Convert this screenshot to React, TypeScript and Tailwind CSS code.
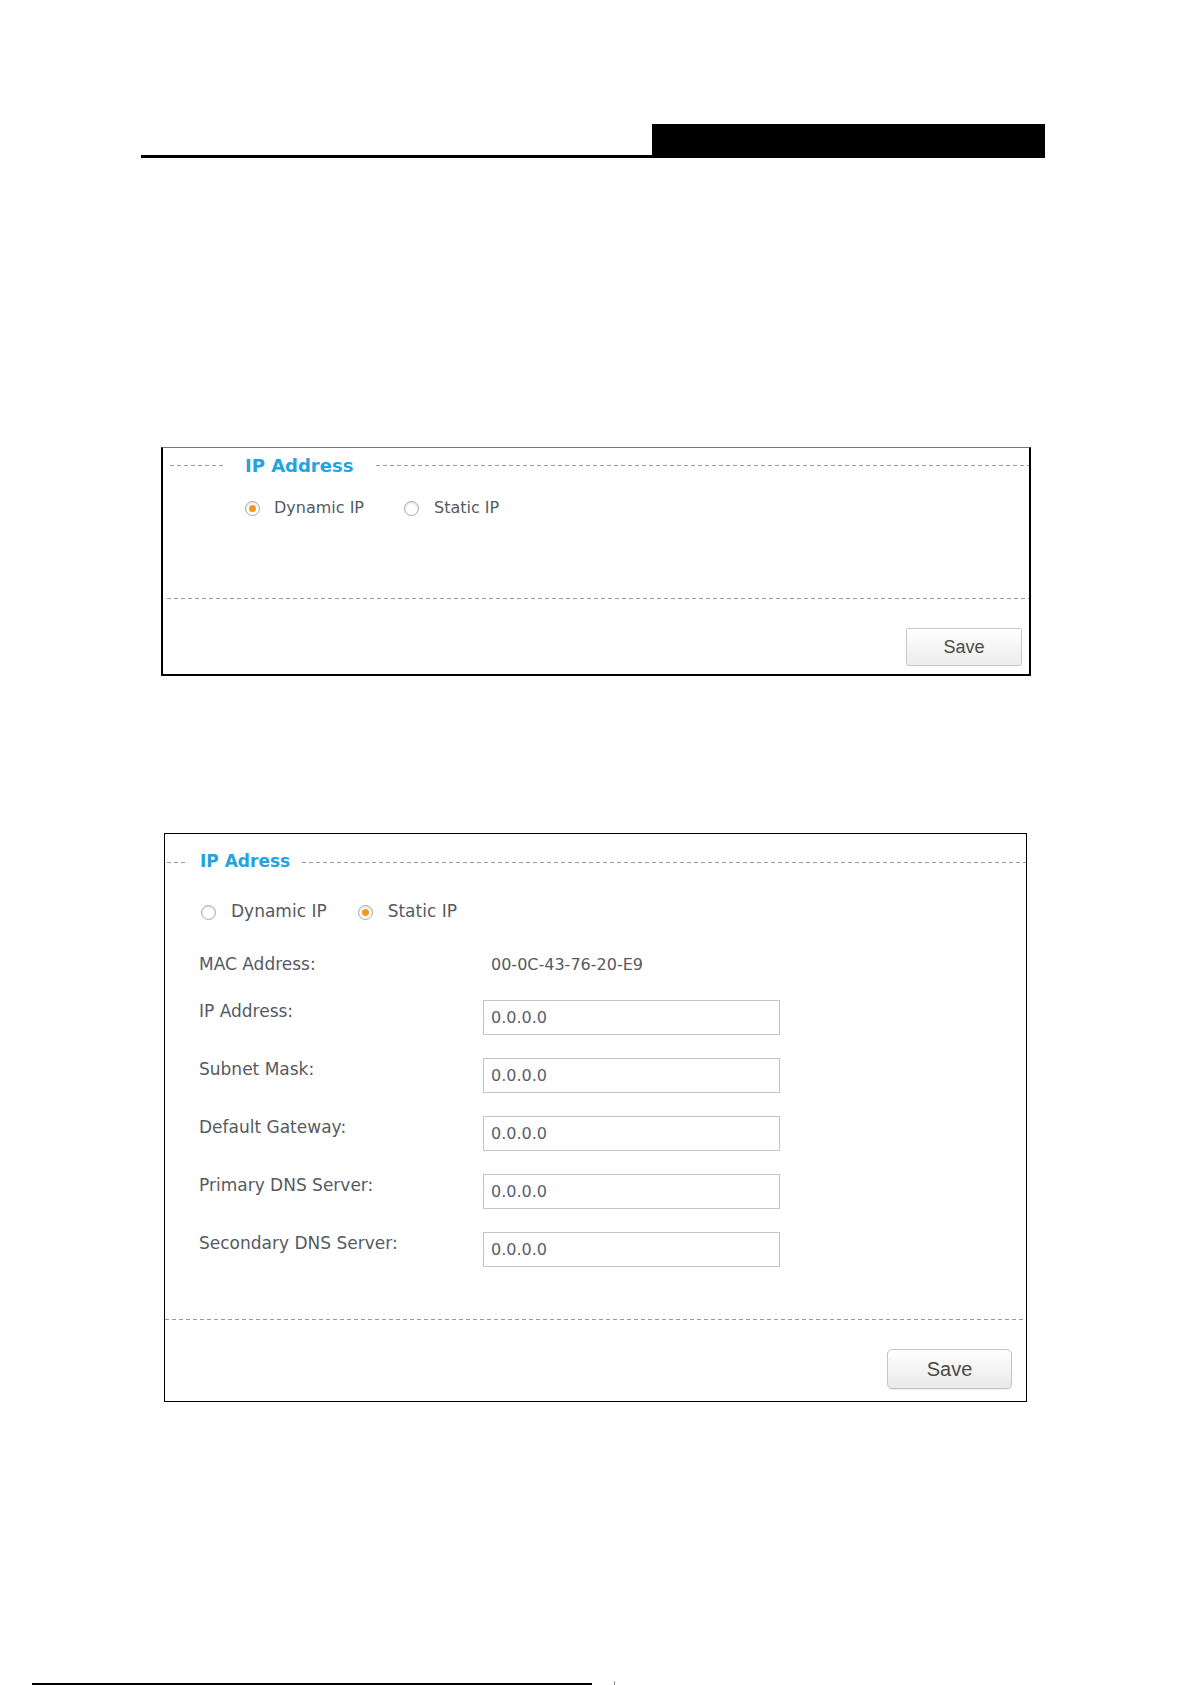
const dash =
  "h-px bg-[repeating-linear-gradient(to_right,#9a9a9a_0_4px,transparent_4px_7px)]";

function Radio({ checked }: { checked?: boolean }) {
  return (
    <span className="flex h-[15px] w-[15px] shrink-0 items-center justify-center rounded-full border border-[#a9a9a9] bg-white shadow-[inset_0_1px_2px_rgba(0,0,0,0.15)]">
      {checked && <span className="h-[7px] w-[7px] rounded-full bg-[#f7941d]" />}
    </span>
  );
}

const fields = [
  "IP Address:",
  "Subnet Mask:",
  "Default Gateway:",
  "Primary DNS Server:",
  "Secondary DNS Server:",
];

export default function App() {
  return (
    <div className="relative h-[1685px] w-[1191px] overflow-hidden bg-white font-['DejaVu_Sans',sans-serif] text-[#555a60]">
      {/* page header bar */}
      <div className="ml-[141px] flex w-[904px] pt-[124px]">
        <div className="flex-1 self-end border-b-[3px] border-black" />
        <div className="h-[34px] w-[393px] bg-black" />
      </div>

      {/* dynamic ip panel */}
      <section className="ml-[161px] mt-[289px] flex h-[229px] w-[870px] flex-col border-2 border-t border-black border-t-[#777]">
        <div className="flex h-[34px] items-center">
          <div className={`${dash} ml-[7px] w-[55px]`} />
          <h2 className="mx-[20px] text-[18px] font-bold text-[#23a3df]">IP Address</h2>
          <div className={`${dash} ml-[3px] flex-1`} />
        </div>
        <div className="mt-[11px] flex h-[30px] items-center pl-[82px] text-[16px]">
          <Radio checked />
          <span className="ml-[14px]">Dynamic IP</span>
          <span className="ml-[40px]">
            <Radio />
          </span>
          <span className="ml-[15px]">Static IP</span>
        </div>
        <div className={`${dash} ml-[4px] mt-[75px]`} />
        <div className="mt-[29px] flex justify-end pr-[7px]">
          <button className="h-[38px] w-[116px] rounded-[2px] border border-[#c8c8c8] bg-[linear-gradient(#ffffff,#ececec)] font-['Liberation_Sans',sans-serif] text-[18px] text-[#4a4a4a]">
            Save
          </button>
        </div>
      </section>

      {/* static ip panel */}
      <section className="ml-[164px] mt-[157px] flex h-[569px] w-[863px] flex-col border border-black">
        <div className="mt-[11px] flex h-[34px] items-center">
          <div className={`${dash} ml-[2px] w-[21px]`} />
          <h2 className="mx-[12px] text-[17px] font-bold text-[#23a3df]">IP Adress</h2>
          <div className={`${dash} flex-1`} />
        </div>
        <div className="mt-[18px] flex h-[30px] items-center pl-[36px] text-[17px]">
          <Radio />
          <span className="ml-[15px]">Dynamic IP</span>
          <span className="ml-[31px]">
            <Radio checked />
          </span>
          <span className="ml-[15px]">Static IP</span>
        </div>
        <div className="mt-[28px] flex h-[20px] items-center pl-[34px]">
          <span className="w-[292px] text-[17px]">MAC Address:</span>
          <span className="text-[16px]">00-0C-43-76-20-E9</span>
        </div>
        <div className="mt-[25px] flex flex-col gap-[23px] pl-[34px]">
          {fields.map((label) => (
            <div key={label} className="flex items-start">
              <span className="w-[284px] text-[17px] leading-[22px]">{label}</span>
              <div className="flex h-[35px] w-[297px] items-center border border-[#c4c4c4] pl-[7px] text-[16px] text-[#5a6070]">
                0.0.0.0
              </div>
            </div>
          ))}
        </div>
        <div className={`${dash} mt-[52px]`} />
        <div className="mt-[29px] flex justify-end pr-[14px]">
          <button className="h-[40px] w-[125px] rounded-[5px] border border-[#c4c4c4] bg-[linear-gradient(#ffffff,#e9e9e9)] font-['Liberation_Sans',sans-serif] text-[20px] text-[#4a4a4a] shadow-[0_1px_1px_rgba(0,0,0,0.08)]">
            Save
          </button>
        </div>
      </section>

      {/* footer rule */}
      <div className="absolute left-[32px] top-[1683px] h-[2px] w-[560px] bg-black" />
      <div className="absolute left-[614px] top-[1681px] h-[4px] w-px bg-[#999]" />
    </div>
  );
}
